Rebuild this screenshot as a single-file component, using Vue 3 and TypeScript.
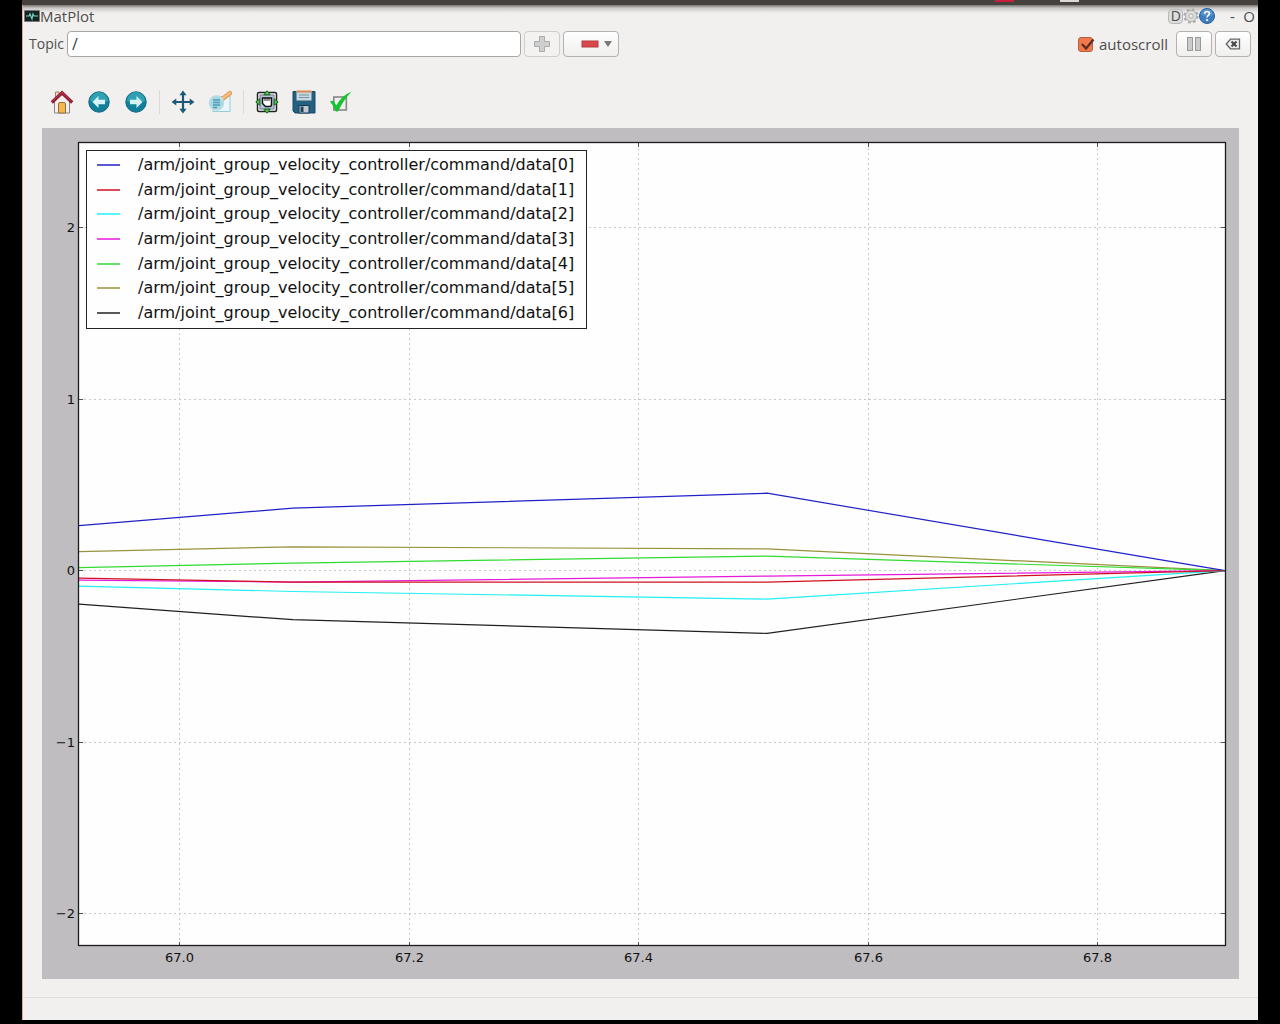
<script setup lang="ts">
import { computed, ref } from 'vue'

interface Series {
  name: string
  color: string
  values: number[]
}

const topic = ref('/')
const autoscroll = ref(true)

const times = [66.912, 67.0985, 67.5118, 67.911]
const base = '/arm/joint_group_velocity_controller/command/data'
const series: Series[] = [
  { name: `${base}[0]`, color: '#2020c8', values: [0.262, 0.365, 0.452, 0] },
  { name: `${base}[1]`, color: '#d01020', values: [-0.044, -0.067, -0.067, 0] },
  { name: `${base}[2]`, color: '#20f0f4', values: [-0.09, -0.122, -0.166, 0] },
  { name: `${base}[3]`, color: '#e818dc', values: [-0.055, -0.067, -0.032, 0] },
  { name: `${base}[4]`, color: '#30dc30', values: [0.017, 0.044, 0.085, 0] },
  { name: `${base}[5]`, color: '#98923c', values: [0.111, 0.139, 0.127, 0] },
  { name: `${base}[6]`, color: '#202020', values: [-0.196, -0.286, -0.366, 0] },
]

const fig = { width: 1197, height: 851 }
const axes = { left: 37, right: 1183, top: 15, bottom: 818 }
const xLimits = [66.912, 67.911]
const yLimits = [-2.19, 2.495]
const xTicks = [67.0, 67.2, 67.4, 67.6, 67.8]
const yTicks = [2, 1, 0, -1, -2]

const px = (t: number) =>
  axes.left + ((t - xLimits[0]) / (xLimits[1] - xLimits[0])) * (axes.right - axes.left)
const py = (v: number) =>
  axes.bottom - ((v - yLimits[0]) / (yLimits[1] - yLimits[0])) * (axes.bottom - axes.top)
const snap = (n: number) => Math.floor(n) + 0.5

// later series are drawn first so the first topic stays on top
const lines = computed(() =>
  [...series].reverse().map((s) => ({
    color: s.color,
    points: s.values.map((v, i) => `${px(times[i]).toFixed(1)},${py(v).toFixed(1)}`).join(' '),
  })),
)
const xGrid = xTicks.map((t) => ({ at: snap(px(t)), label: t.toFixed(1) }))
const yGrid = yTicks.map((v) => ({ at: snap(py(v)), label: String(v).replace('-', '\u2212') }))
</script>

<template>
  <div class="screen">
    <div class="panel"><i class="chip red"></i><i class="chip pale"></i></div>
    <main class="window">
      <header class="title">
        <svg class="logo" width="16" height="12" viewBox="0 0 16 12">
          <rect width="16" height="12" rx="1" fill="#777" />
          <rect x="1" y="1" width="14" height="10" fill="#142422" />
          <path d="M2 6h3l1-2 2 5 1-5 1 2h4" fill="none" stroke="#7fd6bb" stroke-width="1.2" />
        </svg>
        <h1>MatPlot</h1>
        <div class="dock">
          <button type="button" class="flat d" aria-label="Dock">D</button>
          <button type="button" class="flat" aria-label="Settings">
            <svg width="16" height="16" viewBox="0 0 16 16">
              <circle cx="8" cy="8" r="6.3" fill="none" stroke="#aaa" stroke-width="2.6" stroke-dasharray="2.5 2.45" />
              <circle cx="8" cy="8" r="5.6" fill="#dedede" stroke="#b0b0b0" />
              <circle cx="8" cy="8" r="2.2" fill="#f1f0ef" stroke="#aaa" />
            </svg>
          </button>
          <button type="button" class="flat" aria-label="Help">
            <svg width="16" height="16" viewBox="0 0 16 16">
              <circle cx="8" cy="8" r="7.5" fill="#3d7fc0" stroke="#2c609e" />
              <path d="M2 7a6 6 0 0 1 12 0q-6 2-12 0z" fill="#6aa2d6" opacity=".6" />
              <path d="M5.6 5.8q.2-2.3 2.5-2.3t2.4 2.1c0 1.9-2.4 1.7-2.4 3.9" fill="none" stroke="#fff" stroke-width="1.6" />
              <circle cx="8.1" cy="12" r="1.1" fill="#fff" />
            </svg>
          </button>
          <button type="button" class="flat min">-</button>
          <button type="button" class="flat">O</button>
        </div>
      </header>

      <form class="controls" @submit.prevent>
        <label for="topic">Topic</label>
        <input id="topic" v-model="topic" class="topic" type="text" />
        <button type="button" class="btn" disabled aria-label="Add topic">
          <svg width="18" height="18" viewBox="0 0 18 18">
            <path d="M6.5 1.5h5v5h5v5h-5v5h-5v-5h-5v-5h5z" fill="#cfcfcf" stroke="#aaa" />
          </svg>
        </button>
        <button type="button" class="btn menu" aria-label="Remove topic">
          <svg width="18" height="8" viewBox="0 0 18 8">
            <rect x="1" y="1" width="16" height="6" fill="#d84a4a" stroke="#b53a3e" />
          </svg>
          <svg width="8" height="6" viewBox="0 0 8 6"><path d="M0 0h8L4 6z" fill="#777" /></svg>
        </button>
        <label class="auto">
          <span class="tick">
            <input v-model="autoscroll" type="checkbox" />
            <svg v-if="autoscroll" width="18" height="16" viewBox="0 0 18 16">
              <path d="M4 7l4 4.500L15.500 2.500" fill="none" stroke="#5a2c20" stroke-width="2.2" />
            </svg>
          </span>
          autoscroll
        </label>
        <button type="button" class="btn" aria-label="Pause">
          <svg width="16" height="16" viewBox="0 0 16 16">
            <rect x="1.500" y="1.500" width="5" height="13" fill="#ccc" stroke="#999" />
            <rect x="9.500" y="1.500" width="5" height="13" fill="#ccc" stroke="#999" />
          </svg>
        </button>
        <button type="button" class="btn" aria-label="Clear">
          <svg width="16" height="12" viewBox="0 0 16 12">
            <path d="M5.500 1.200h9v9.600h-9L1.200 6z" fill="#eee" stroke="#666" stroke-width="1.300" />
            <path d="M6.500 3.500l5 5m0-5l-5 5" stroke="#444" stroke-width="2" />
          </svg>
        </button>
      </form>

      <nav class="tools" aria-label="Plot tools">
        <button type="button" class="flat" aria-label="Home">
          <svg width="24" height="24" viewBox="0 0 24 24">
            <path d="M5.500 2h3.500v6H5.500z" fill="#f3dfc8" stroke="#a5825c" />
            <path d="M4.500 11L12 4.500l7.500 6.500v12h-15z" fill="#f4f0ee" stroke="#8a8488" />
            <path d="M8.500 23v-9q0-1.500 1.500-1.500h4q1.500 0 1.500 1.500v9z" fill="#f6b848" stroke="#8f6f48" />
            <path d="M1.800 12.500L12 2.800l10.200 9.700" fill="none" stroke="#8c1c34" stroke-width="3.200" />
            <path d="M2.500 11.300L12 2.500l9.500 8.800" fill="none" stroke="#c63a52" />
          </svg>
        </button>
        <button type="button" class="flat" aria-label="Back">
          <svg width="24" height="24" viewBox="0 0 24 24">
            <circle cx="12" cy="12" r="10.200" fill="#128099" stroke="#0d6880" />
            <path d="M3 11a9 9 0 0 1 18 0q-9 4-18 0z" fill="#45b8c6" opacity=".6" />
            <path d="M5.500 12l6-6v3.800h6.500v4.400h-6.500V18z" fill="#d6f4f6" />
          </svg>
        </button>
        <button type="button" class="flat" aria-label="Forward">
          <svg width="24" height="24" viewBox="0 0 24 24">
            <circle cx="12" cy="12" r="10.200" fill="#128099" stroke="#0d6880" />
            <path d="M3 11a9 9 0 0 1 18 0q-9 4-18 0z" fill="#45b8c6" opacity=".6" />
            <path d="M18.500 12l-6-6v3.800H6v4.400h6.500V18z" fill="#d6f4f6" />
          </svg>
        </button>
        <span class="sep"></span>
        <button type="button" class="flat" aria-label="Pan">
          <svg width="24" height="24" viewBox="0 0 24 24">
            <path d="M12 3v18M3 12h18" stroke="#1d5876" stroke-width="2.200" />
            <path d="M12 .5l3.600 4.800H8.400zM12 23.500l3.600-4.800H8.400zM.5 12l4.800-3.600v7.200zM23.500 12l-4.800-3.600v7.200z" fill="#1d5876" />
          </svg>
        </button>
        <button type="button" class="flat" aria-label="Zoom">
          <svg width="24" height="24" viewBox="0 0 24 24">
            <rect x="5" y="6.500" width="17" height="15" fill="#eaf6fa" stroke="#98cbd8" />
            <path d="M14.500 9L22 3" stroke="#dc9a54" stroke-width="4.400" stroke-linecap="round" />
            <path d="M14.500 8.600L22 2.700" stroke="#f8bd7c" stroke-width="2.400" stroke-linecap="round" />
            <circle cx="8.500" cy="13" r="7" fill="#a9d7e2" stroke="#b9dbe2" stroke-width="1.500" />
            <path d="M5 10h7M5 12.500h7M5 15h7M5 17.500h4" stroke="#4e9cb6" stroke-width="1.300" />
            <path d="M14.500 8l-2 2" stroke="#c9dfe4" stroke-width="2" />
          </svg>
        </button>
        <span class="sep"></span>
        <button type="button" class="flat" aria-label="Subplots">
          <svg width="24" height="24" viewBox="0 0 24 24">
            <rect x="2.500" y="2.500" width="19" height="19" rx="1.500" fill="#f7f8fa" stroke="#222" stroke-width="1.500" />
            <rect x="5" y="5" width="14" height="14" fill="#b4c6dc" stroke="#707a88" />
            <path d="M7.500 8h9v6.500q0 2-2 2h-4l-3-3z" fill="#fff" stroke="#111" stroke-width="1.500" />
            <path d="M10 7.500v3.500M12 7.500v3.500M14 7.500v3.500" stroke="#222" />
            <path d="M12 .8l3.200 4H8.800zM12 23.200l3.200-4H8.800zM.8 12l4-3.200v6.400zM23.200 12l-4-3.200v6.400z" fill="#52c452" stroke="#17651e" />
          </svg>
        </button>
        <button type="button" class="flat" aria-label="Save">
          <svg width="24" height="24" viewBox="0 0 24 24">
            <path d="M1 1.500h22V23H3l-2-2z" fill="#24607f" stroke="#174a66" />
            <rect x="4.500" y="1" width="15" height="9.500" fill="#c8d7df" />
            <path d="M4.500 1.500h15" stroke="#dc8850" stroke-width="2" />
            <path d="M7 5h10M7 7.500h10" stroke="#7895a4" />
            <rect x="7" y="15.500" width="10" height="7.500" fill="#c2c8d2" stroke="#123c54" />
            <rect x="8.500" y="16.500" width="3" height="5.500" fill="#26445e" />
          </svg>
        </button>
        <button type="button" class="flat" aria-label="Edit parameters">
          <svg width="24" height="24" viewBox="0 0 24 24">
            <rect x="4.800" y="7" width="12.500" height="13" fill="#f1f0f0" stroke="#888" stroke-width="1.600" />
            <path d="M1 11.500q2.500-1.500 4 0l2.300 4Q12.500 5.500 22.500 1.800 14 10.500 9.500 21q-1.500 1-3 0Q4.500 15.500 1 11.500z" fill="#16c432" />
          </svg>
        </button>
      </nav>

      <section class="figure">
        <svg class="plot" :viewBox="`0 0 ${fig.width} ${fig.height}`" role="img" aria-label="Joint velocity plot">
          <rect :x="axes.left" :y="axes.top" :width="axes.right - axes.left" :height="axes.bottom - axes.top" fill="#fefefe" />
          <g class="grid">
            <line v-for="g in xGrid" :key="g.label" :x1="g.at" :x2="g.at" :y1="axes.top" :y2="axes.bottom" />
            <line v-for="g in yGrid" :key="g.label" :x1="axes.left" :x2="axes.right" :y1="g.at" :y2="g.at" />
          </g>
          <polyline v-for="l in lines" :key="l.color" :points="l.points" :stroke="l.color" class="line" />
          <g class="marks">
            <path v-for="g in xGrid" :key="g.label" :d="`M${g.at} ${axes.top}v4M${g.at} ${axes.bottom}v-4`" />
            <path v-for="g in yGrid" :key="g.label" :d="`M${axes.left} ${g.at}h4M${axes.right} ${g.at}h-4`" />
          </g>
          <rect class="frame" :x="axes.left - 0.5" :y="axes.top - 0.5" :width="axes.right - axes.left + 1" :height="axes.bottom - axes.top" />
          <text v-for="g in xGrid" :key="g.label" :x="g.at" :y="axes.bottom + 16" text-anchor="middle">{{ g.label }}</text>
          <text v-for="g in yGrid" :key="g.label" :x="axes.left - 4" :y="g.at + 4" text-anchor="end">{{ g.label }}</text>
        </svg>
        <ul class="legend">
          <li v-for="s in series" :key="s.name">
            <svg width="23" height="2" viewBox="0 0 23 2"><path d="M0 1h23" :stroke="s.color" stroke-width="1.500" /></svg>
            <span>{{ s.name }}</span>
          </li>
        </ul>
      </section>
      <footer class="status"></footer>
    </main>
  </div>
</template>

<style>
body {
  margin: 0;
  background: #000;
}
</style>

<style scoped>
.screen {
  box-sizing: border-box;
  min-height: 100vh;
  padding: 0 22px 4px;
  background: #000;
  display: flex;
  flex-direction: column;
  font-family: 'Open Sans', 'Noto Sans', sans-serif;
  font-size: 14px;
  line-height: 18px;
  color: #4d4d4d;
}
.panel {
  height: 5px;
  background: #45413c;
  display: flex;
  justify-content: flex-end;
  gap: 46px;
  padding-right: 179px;
}
.chip {
  width: 19px;
  height: 2px;
  background: #dcd9d4;
}
.chip.red {
  background: #c8203c;
}
.window {
  flex: 1;
  display: flex;
  flex-direction: column;
  border-left: 1px solid #dcaaa2;
  background: linear-gradient(#77746f, #c9c7c5 3px, #f1f0ef 8px);
}
.title {
  display: flex;
  align-items: center;
  height: 18px;
  padding: 2px 3px 1px 1px;
  font-size: 15px;
}
h1 {
  margin: 0;
  font: inherit;
}
.dock {
  margin-left: auto;
  display: flex;
  align-items: center;
}
button {
  font: inherit;
  color: inherit;
  padding: 0;
}
.flat {
  border: 0;
  background: none;
  display: flex;
  align-items: center;
  justify-content: center;
}
.d {
  box-sizing: border-box;
  width: 15px;
  height: 15px;
  border: 1px solid #b8b8b8;
  border-radius: 4px;
  background: #dededd;
  font-size: 14px;
  line-height: 12px;
}
.min {
  width: 28px;
  padding-left: 6px;
}
.controls {
  display: flex;
  align-items: center;
  gap: 3px;
  margin-top: 5px;
  padding: 0 7px 0 6px;
}
.topic {
  box-sizing: border-box;
  flex: 0 1 454px;
  min-width: 0;
  height: 26px;
  padding: 0 4px;
  border: 1px solid #aaa6a2;
  border-radius: 4px;
  background: #fff;
  font: inherit;
  font-size: 16px;
  color: #3c3c3c;
}
.btn {
  box-sizing: border-box;
  width: 36px;
  height: 26px;
  border: 1px solid #b4b1ae;
  border-radius: 4px;
  background: linear-gradient(#fff, #f0efee);
  display: flex;
  align-items: center;
  justify-content: center;
}
.btn:disabled {
  border-color: #d0cecc;
  background: #f3f2f1;
}
.menu {
  width: 56px;
  justify-content: flex-end;
  gap: 5px;
  padding-right: 6px;
}
.auto {
  margin-left: auto;
  margin-right: 5px;
  display: flex;
  align-items: center;
  gap: 6px;
  font-size: 15px;
  line-height: 16px;
}
.tick {
  position: relative;
  display: flex;
}
.tick input {
  appearance: none;
  box-sizing: border-box;
  width: 15px;
  height: 15px;
  margin: 0;
  border: 1px solid #b4603e;
  border-radius: 3px;
  background: #f0794c;
}
.tick svg {
  position: absolute;
  left: 0;
  top: 0;
  pointer-events: none;
}
.tools {
  display: flex;
  align-items: center;
  gap: 13px;
  margin-top: 33px;
  padding-left: 27px;
}
.sep {
  width: 1px;
  height: 24px;
  margin: 0 -2px;
  background: #dcdad8;
}
.figure {
  position: relative;
  margin: 14px 19px 0;
  background: #c0bdc0;
}
.plot {
  display: block;
  width: 100%;
  height: auto;
}
.grid line {
  stroke: #c8c8c8;
  stroke-dasharray: 2 3;
}
.line {
  fill: none;
  stroke-width: 1.2px;
}
.marks path {
  stroke: #555;
}
.frame {
  fill: none;
  stroke: #1a1a1a;
  stroke-width: 1.3px;
}
.plot text {
  font-family: 'DejaVu Sans', sans-serif;
  font-size: 13px;
  fill: #111;
}
.legend {
  position: absolute;
  left: 44px;
  top: 22px;
  box-sizing: border-box;
  height: 179px;
  margin: 0;
  padding: 2px 12px 3px 10px;
  border: 1px solid #222;
  background: #fefefe;
  list-style: none;
  display: grid;
  grid-template-rows: repeat(7, 1fr);
  font-family: 'DejaVu Sans', sans-serif;
  font-size: 16px;
  color: #111;
}
.legend li {
  display: flex;
  align-items: center;
  gap: 18px;
}
.status {
  margin-top: 18px;
  border-top: 1px solid #dedddb;
  flex: 1;
  min-height: 20px;
}
</style>
